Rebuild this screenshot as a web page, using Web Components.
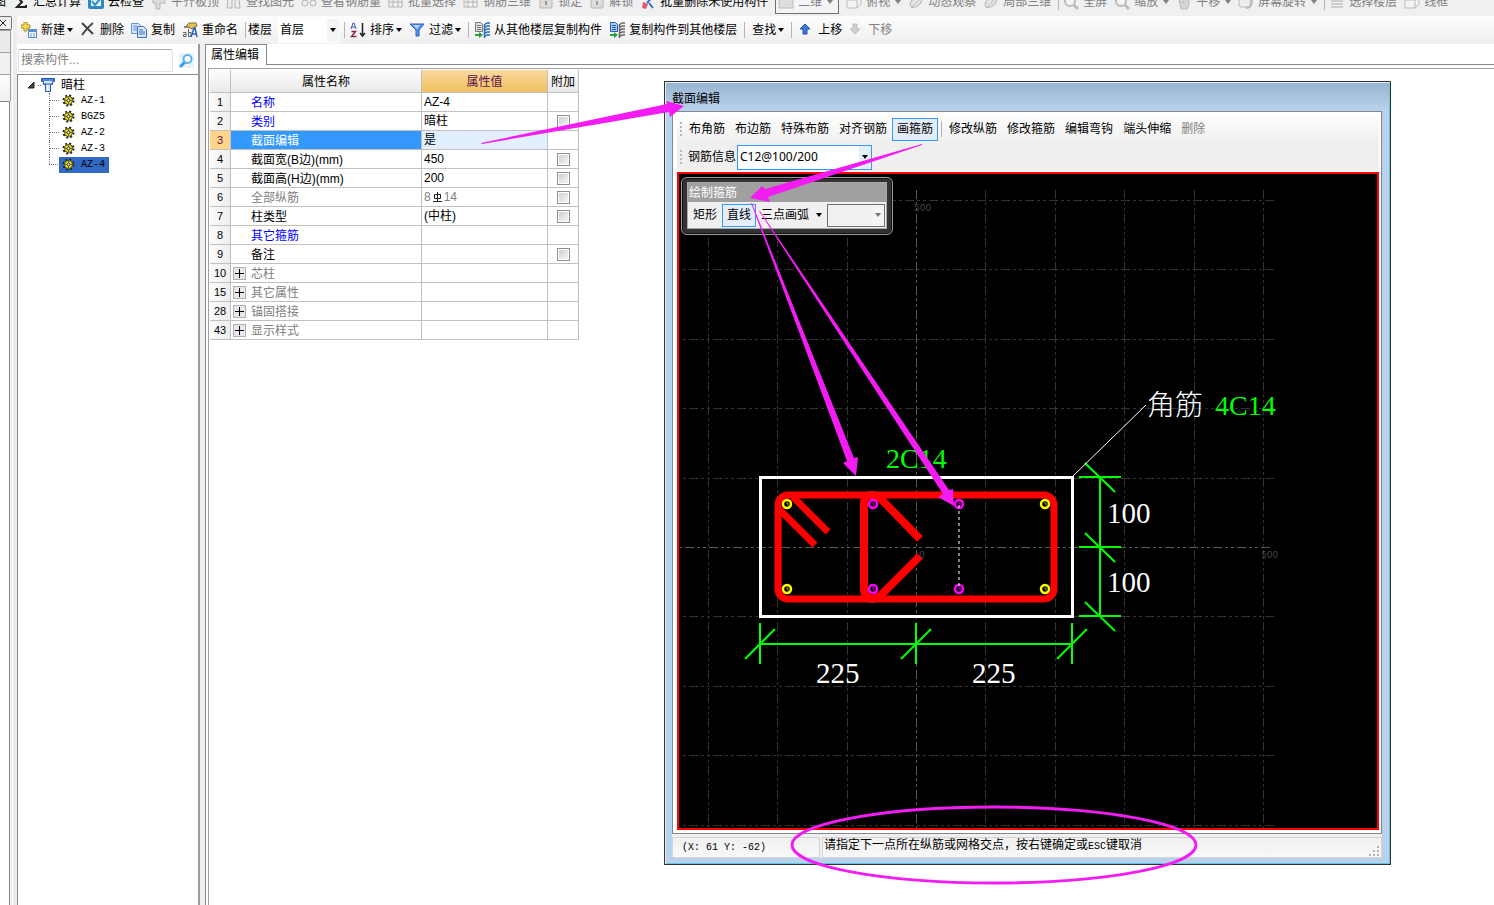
<!DOCTYPE html>
<html lang="zh-CN">
<head>
    <meta charset="UTF-8">
    <meta name="viewport" content="width=device-width, initial-scale=1.0">
    <title>属性编辑</title>
    <style>
        html, body {
            height: 100%;
        }
        body {
            margin: 0;
            overflow: hidden;
            background: #f0f0f0;
            color: #000;
            font: 12px/16px "Liberation Sans", "Noto Sans CJK SC", sans-serif;
        }
    </style>
</head>
<body>
    <main-window></main-window>

    <template id="tmpl-main">
        <style>
            :host {
                display: flex;
                flex-direction: column;
                height: 100vh;
            }
            .view-bar {
                --arrow-gap: 5px;
                --split-end: -3px;
                height: 16px;
                overflow: hidden;
                display: flex;
                align-items: flex-end;
                background: #f0f0f0;
            }
            .view-bar tool-bar {
                height: 29px;
            }
            .cut {
                margin-left: -6px;
            }
            .boxed {
                border: 1px solid #707070;
                height: 22px;
                display: flex;
                align-items: center;
                padding: 0 5px 0 2px;
                background: #f4f4f4;
            }
            .body {
                flex: 1;
                display: flex;
                min-height: 0;
            }
            .content {
                flex: 1;
                display: flex;
                flex-direction: column;
                min-width: 0;
            }
            .edit-bar {
                height: 28px;
                padding-left: 4px;
                background: linear-gradient(#fdfdfd, #efefef);
            }
            .floor {
                margin: 0 -3px;
            }
            .work {
                flex: 1;
                display: flex;
                min-height: 0;
            }
            component-tree {
                width: 183px;
                margin-right: 5px;
            }
            property-editor {
                flex: 1;
            }
            section-dialog {
                position: absolute;
                left: 664px;
                right: 103px;
                top: 81px;
                bottom: 40px;
            }
            note-layer {
                position: absolute;
                inset: 0;
            }
        </style>

        <div class="view-bar">
            <tool-bar>
                <span class="cut">图</span>
                <tool-button icon="sum">汇总计算</tool-button>
                <tool-button icon="cloud">云检查</tool-button>
                <tool-button icon="level" off>平齐板顶</tool-button>
                <tool-button icon="binocular" off>查找图元</tool-button>
                <tool-button icon="glasses" off>查看钢筋量</tool-button>
                <tool-button icon="grid" off>批量选择</tool-button>
                <tool-button icon="grid" off>钢筋三维</tool-button>
                <tool-button icon="lock" off>锁定</tool-button>
                <tool-button icon="lock" off>解锁</tool-button>
                <tool-button icon="brush">批量删除未使用构件</tool-button>
                <div class="boxed"><tool-button icon="plane" off arrow>二维</tool-button></div>
                <tool-button icon="cube" off arrow>俯视</tool-button>
                <tool-button icon="orbit" off>动态观察</tool-button>
                <tool-button icon="orbit" off>局部三维</tool-button>
                <tool-split></tool-split>
                <tool-button icon="zoom" off>全屏</tool-button>
                <tool-button icon="zoom" off arrow>缩放</tool-button>
                <tool-button icon="hand" off arrow>平移</tool-button>
                <tool-button icon="turn" off arrow>屏幕旋转</tool-button>
                <tool-split></tool-split>
                <tool-button icon="floors" off>选择楼层</tool-button>
                <tool-button icon="cube" off>线框</tool-button>
            </tool-bar>
        </div>

        <div class="body">
            <side-strip></side-strip>
            <div class="content">
                <tool-bar class="edit-bar">
                    <tool-button icon="new" arrow>新建</tool-button>
                    <tool-button icon="delete">删除</tool-button>
                    <tool-button icon="copy">复制</tool-button>
                    <tool-button icon="rename">重命名</tool-button>
                    <tool-split></tool-split>
                    <combo-box class="floor" label="楼层" value="首层" width="62" plain></combo-box>
                    <tool-split></tool-split>
                    <tool-button icon="sort" arrow>排序</tool-button>
                    <tool-button icon="filter" arrow>过滤</tool-button>
                    <tool-split></tool-split>
                    <tool-button icon="from">从其他楼层复制构件</tool-button>
                    <tool-button icon="to">复制构件到其他楼层</tool-button>
                    <tool-split class="wide"></tool-split>
                    <tool-button arrow>查找</tool-button>
                    <tool-split class="wide"></tool-split>
                    <tool-button icon="up">上移</tool-button>
                    <tool-button icon="down" off>下移</tool-button>
                </tool-bar>
                <div class="work">
                    <component-tree></component-tree>
                    <property-editor></property-editor>
                </div>
            </div>
        </div>
        <section-dialog></section-dialog>
        <note-layer></note-layer>
    </template>

    <template id="tmpl-bar">
        <style>
            :host {
                display: flex;
                align-items: center;
                gap: 7px;
                white-space: nowrap;
                box-sizing: border-box;
            }
        </style>
        <slot></slot>
    </template>

    <template id="tmpl-strip">
        <style>
            :host {
                width: 17px;
                flex: none;
                display: flex;
                flex-direction: column;
                background: linear-gradient(90deg, #f0f0f0 12px, #fafafa 12px, #fafafa 13px, #ececec 13px);
            }
            button {
                width: 12px;
                height: 14px;
                padding: 0;
                border: 1px solid #707070;
                border-left: 0;
                border-radius: 0 2px 2px 0;
                background: #f0f0f0;
                display: flex;
                align-items: center;
            }
            .row {
                width: 10px;
                height: 21px;
                border: 1px solid #a0a0a0;
                border-left: 0;
                border-bottom: 0;
                background: #ebebeb;
            }
            .row + .row {
                background: #f0f0f0;
            }
            .row.head {
                height: 26px;
                background: linear-gradient(#fdfdfd, #f0f0f0);
            }
            .page {
                flex: 1;
                width: 9px;
                border: 1px solid #828790;
                border-left: 0;
                border-bottom: 0;
                background: #fff;
            }
        </style>
        <button aria-label="关闭"><svg width="8" height="8" viewBox="0 0 8 8"><path d="M0 1l6 6M6 1l-6 6" stroke="#222" fill="none"/></svg></button>
        <div class="row"></div>
        <div class="row"></div>
        <div class="row head"></div>
        <div class="page"></div>
    </template>

    <template id="tmpl-tree">
        <style>
            :host {
                display: flex;
                flex-direction: column;
                box-sizing: border-box;
                border-right: 2px solid #9a9ca2;
                background: #fff;
            }
            .search {
                height: 30px;
                box-sizing: border-box;
                padding: 4px 4px 2px 1px;
                display: flex;
                align-items: center;
                gap: 6px;
            }
            input {
                flex: 1;
                min-width: 0;
                height: 23px;
                box-sizing: border-box;
                border: 1px solid #dbe2ee;
                border-top-color: #abadb3;
                border-radius: 2px;
                padding: 0 2px;
                font: inherit;
            }
            input::placeholder {
                color: #808080;
            }
            .find {
                border: 0;
                padding: 0;
                background: none;
                width: 15px;
                height: 15px;
            }
            .tree {
                flex: 1;
                border: 1px solid #828790;
                border-right: 0;
                border-bottom: 0;
                padding: 2px 0 0 8px;
            }
            .root {
                display: flex;
                align-items: center;
                height: 16px;
            }
            .root svg {
                flex: none;
            }
            ul {
                list-style: none;
                margin: 0 0 0 23px;
                padding: 0;
            }
            li {
                display: flex;
                height: 16px;
            }
            .branch {
                width: 9px;
                flex: none;
                border-left: 1px dotted #777;
                background: repeating-linear-gradient(90deg, #777 0 1px, transparent 1px 2px) 0 7px / 9px 1px no-repeat;
            }
            li:last-child .branch {
                width: 10px;
                border-left: 0;
                background: repeating-linear-gradient(90deg, #777 0 1px, transparent 1px 2px) 0 7px / 9px 1px no-repeat,
                    repeating-linear-gradient(#777 0 1px, transparent 1px 2px) 0 0 / 1px 8px no-repeat;
            }
            .item {
                display: flex;
                align-items: center;
                gap: 6px;
                padding: 0 4px 0 3px;
                font: 10px/16px "Liberation Mono", monospace;
            }
            .item svg {
                margin-bottom: 2px;
            }
            .item.on {
                background: #316ac5;
            }
        </style>
        <div class="search">
            <input type="text" placeholder="搜索构件..." aria-label="搜索构件">
            <button class="find" aria-label="搜索">
                <svg width="15" height="15" viewBox="0 0 15 15"><rect width="15" height="15" fill="#e6f3fc"/><path d="M2 13l4-4" stroke="#3f97dd" stroke-width="3" stroke-linecap="round"/><circle cx="8.500" cy="6" r="4" fill="#fff" stroke="#5cb0ee" stroke-width="2"/></svg>
            </button>
        </div>
        <div class="tree">
            <div class="root">
                <svg width="35" height="16" viewBox="0 0 35 16">
                    <path d="M8 5v6H2z" fill="#444" stroke="#222"/>
                    <path d="M12 8.500h3" stroke="#777" stroke-dasharray="1 1"/>
                    <path d="M15.500 1.500h13v3h-2v3h-2v7h-5v-7h-2v-3h-2z" fill="#d8e8fb" stroke="#2a52b8"/>
                    <path d="M16 2h12v2H16z" fill="#4e86dc"/><path d="M21 8h1v6h-1z" fill="#fff"/><path d="M18 7h8" stroke="#2a52b8"/>
                </svg>
                <span>暗柱</span>
            </div>
            <ul></ul>
        </div>
    </template>

    <template id="tmpl-props">
        <style>
            :host {
                display: flex;
                flex-direction: column;
                background: #fff;
                border-left: 1px solid #828790;
                min-width: 0;
            }
            .tabs {
                display: flex;
                height: 21px;
            }
            .tab {
                border: 1px solid #828790;
                border-left: 0;
                border-bottom: 0;
                padding: 0 7px 1px 5px;
                font: inherit;
                background: #fff;
            }
            .rest {
                flex: 1;
                border-bottom: 1px solid #828790;
            }
            .pane {
                flex: 1;
                margin: 3px 0 0 2px;
                border-top: 1px solid #a0a0a0;
                border-left: 1px solid #a0a0a0;
                padding: 1px;
            }
            table {
                border-spacing: 0;
                table-layout: fixed;
                width: 369px;
            }
            th, td {
                box-sizing: border-box;
                height: 19px;
                padding: 0;
                border-right: 1px solid #c0c0c0;
                border-bottom: 1px solid #c0c0c0;
                font-weight: normal;
                text-align: left;
                white-space: nowrap;
                line-height: 16px;
            }
            thead th {
                height: 23px;
                padding-top: 2px;
                text-align: center;
                background: linear-gradient(#fdfdfd, #e9e9e9);
            }
            thead th.hot {
                background: linear-gradient(#f9d99f, #f1c15f);
                color: #5b0f4c;
            }
            tbody th {
                text-align: center;
                font-size: 11px;
                background: linear-gradient(90deg, #fbfbfb, #eeeeee);
            }
            .name {
                padding-top: 2px;
            }
            .name > div {
                display: flex;
                align-items: center;
                padding-left: 20px;
            }
            .name > .group {
                padding-left: 2px;
                gap: 5px;
            }
            .group button {
                width: 13px;
                height: 13px;
                margin-bottom: 2px;
                padding: 0;
                border: 1px solid #b0b0b0;
                background: #e8e8ea;
                display: flex;
                align-items: center;
                justify-content: center;
            }
            .value {
                padding-left: 2px;
            }
            .blue {
                color: #0000ff;
            }
            .gray {
                color: #808080;
            }
            tr.on th {
                background: #ffd58c;
                color: #5b0f4c;
            }
            tr.on .name {
                background: #3399ff;
                color: #fff;
            }
            tr.on .value {
                background: #e1efff;
            }
            .tick {
                text-align: center;
            }
            input {
                appearance: none;
                display: block;
                width: 13px;
                height: 13px;
                margin: 0 auto;
                border: 1px solid #8e8f8f;
                background: linear-gradient(135deg, #cbcfd5, #f6f6f6) content-box #f4f4f4;
                padding: 1px;
                box-sizing: border-box;
            }
            .bar-sign {
                vertical-align: -1px;
                margin: 0 2px;
            }
        </style>
        <div class="tabs"><button class="tab">属性编辑</button><div class="rest"></div></div>
        <div class="pane">
            <table>
                <colgroup><col style="width: 21px"><col style="width: 191px"><col style="width: 126px"><col style="width: 31px"></colgroup>
                <thead><tr><th></th><th>属性名称</th><th class="hot">属性值</th><th>附加</th></tr></thead>
                <tbody></tbody>
            </table>
        </div>
    </template>

    <template id="tmpl-dialog">
        <style>
            :host {
                display: flex;
                flex-direction: column;
                box-sizing: border-box;
                border: 1px solid #333;
                box-shadow: inset 1px 1px 0 0 #e4eefa, inset -1px -1px 0 0 #5cc8e8;
                padding: 1px 8px 6px 7px;
                background: linear-gradient(#99b4d1, #b9d1ea 28px) padding-box;
            }
            h2 {
                margin: 0;
                height: 28px;
                font: inherit;
                line-height: 32px;
            }
            .frame {
                flex: 1;
                min-height: 0;
                display: flex;
                flex-direction: column;
                border: 1px solid #828790;
                background: #fff;
                padding: 3px 2px 3px 4px;
            }
            .bars {
                background: linear-gradient(#fdfdfd, #efefef 28px);
                padding-left: 3px;
            }
            .bar {
                display: flex;
                align-items: center;
                height: 28px;
            }
            .grip {
                width: 2px;
                height: 14px;
                margin-right: 2px;
                background: repeating-linear-gradient(#b8b8b8 0 2px, transparent 2px 4px);
            }
            .bar combo-box {
                margin-left: 4px;
            }
            .canvas {
                flex: 1;
                min-height: 0;
                margin-top: 1px;
                border: 2px solid #f00;
                background: #000;
                position: relative;
            }
            section-drawing {
                position: absolute;
                inset: 0;
            }
            stirrup-palette {
                position: absolute;
                left: 2px;
                top: 3px;
            }
            .status {
                display: flex;
                gap: 2px;
                height: 21px;
                padding-top: 3px;
                background: #f0f0f0;
            }
            .status > div {
                box-sizing: border-box;
                border: 1px solid #d4d4d4;
                background: linear-gradient(#f0f0f0, #f8f8f8);
                line-height: 20px;
            }
            .pos {
                width: 148px;
                padding-left: 9px;
            }
            .pos, .key {
                font-family: "Liberation Mono", monospace;
                font-size: 10px;
            }
            .tip {
                flex: 1;
                display: flex;
                justify-content: space-between;
                align-items: flex-end;
                padding-left: 1px;
            }
        </style>
        <h2>截面编辑</h2>
        <div class="frame">
            <div class="bars">
                <div class="bar">
                    <span class="grip"></span>
                    <text-button>布角筋</text-button><text-button>布边筋</text-button><text-button>特殊布筋</text-button><text-button>对齐钢筋</text-button><text-button on>画箍筋</text-button>
                    <tool-split class="tight"></tool-split>
                    <text-button>修改纵筋</text-button><text-button>修改箍筋</text-button><text-button>编辑弯钩</text-button><text-button>端头伸缩</text-button><text-button off>删除</text-button>
                </div>
                <div class="bar">
                    <span class="grip"></span>
                    <combo-box label="钢筋信息" value="C12@100/200" width="135" hot></combo-box>
                </div>
            </div>
            <div class="canvas">
                <section-drawing></section-drawing>
                <stirrup-palette></stirrup-palette>
            </div>
        </div>
        <div class="status">
            <div class="pos">(X: 61 Y: -62)</div>
            <div class="tip">
                <span>请指定下一点所在纵筋或网格交点，按右键确定或<span class="key">ESC</span>键取消</span>
                <svg width="12" height="12" viewBox="0 0 12 12"><path d="M8 1h2v2H8zM8 5h2v2H8zM4 5h2v2H4zM8 9h2v2H8zM4 9h2v2H4zM0 9h2v2H0z" fill="#b4b4b4"/></svg>
            </div>
        </div>
    </template>

    <template id="tmpl-palette">
        <style>
            :host {
                display: block;
                width: 212px;
                box-sizing: border-box;
                padding: 4px 5px 5px;
                border: 1px solid #9a9a9a;
                border-radius: 6px;
                background: #333;
                box-shadow: inset 0 0 0 1px #111;
            }
            .in {
                border: 1px solid #aaa;
                background: #f0f0f0;
            }
            .title {
                height: 19px;
                line-height: 20px;
                padding-left: 1px;
                background: #a0a0a0;
                color: #fff;
            }
            .row {
                display: flex;
                align-items: center;
                height: 26px;
            }
            .arrow {
                margin: 0 5px 0 2px;
            }
        </style>
        <div class="in">
            <div class="title">绘制箍筋</div>
            <div class="row">
                <text-button>矩形</text-button><text-button on>直线</text-button><text-button>三点画弧</text-button>
                <svg class="arrow" width="6" height="4" viewBox="0 0 6 4"><path d="M0 0h6L3 4z"/></svg>
                <combo-box width="58" dim></combo-box>
            </div>
        </div>
    </template>

    <script>
        const ICONS = {
            sum: '<path d="M12 3H4l5 5-5 5h9v-2" fill="none" stroke="#222" stroke-width="2"/>',
            cloud: '<rect x="0" y="1" width="16" height="14" rx="2" fill="#2a8ac8"/><path d="M3 5h10v7H3z" fill="#e8f4fc"/><path d="M4 7l3 4 5-6" stroke="#2a8ac8" stroke-width="2" fill="none"/>',
            level: '<path d="M2 4h12v5H9v6H5V9H2z" fill="#ddd" stroke="#b4b4b4"/>',
            binocular: '<path d="M2 5h4v9H1zM9 5h4l1 9H9z" fill="#eee" stroke="#b4b4b4"/>',
            glasses: '<circle cx="4" cy="9" r="3" fill="#eee" stroke="#b4b4b4"/><circle cx="12" cy="9" r="3" fill="#eee" stroke="#b4b4b4"/>',
            grid: '<path d="M1 3h13v10H1zM1 8h13M5 3v10M10 3v10" fill="none" stroke="#b4b4b4"/>',
            lock: '<rect x="2" y="5" width="12" height="9" rx="1" fill="#ddd" stroke="#b4b4b4"/><path d="M8 7v4" stroke="#999" stroke-width="2"/>',
            brush: '<path d="M13 2L7 9" stroke="#2a70c8" stroke-width="2"/><path d="M3 8l5 2-2 5-4-1z" fill="#e05a6a"/><path d="M9 9l4 5" stroke="#2a70c8" stroke-width="2"/>',
            plane: '<rect x="1" y="3" width="14" height="11" fill="#ddd" stroke="#bbb"/>',
            cube: '<path d="M1 6l4-4h10v8l-4 4H1zM1 6h10v8M11 6l4-4" fill="#f4f4f4" stroke="#bbb"/>',
            orbit: '<ellipse cx="8" cy="8" rx="7" ry="4" transform="rotate(-40 8 8)" fill="#e4e4e4" stroke="#b4b4b4"/><path d="M3 14l9-9" stroke="#bbb"/>',
            zoom: '<circle cx="7" cy="7" r="5" fill="#f4f4f4" stroke="#bbb" stroke-width="2"/><path d="M11 11l4 4" stroke="#bbb" stroke-width="3"/>',
            hand: '<path d="M3 6l4 3V3h6v8l-2 4H5z" fill="#d4d4d4" stroke="#bbb"/>',
            turn: '<rect x="1" y="4" width="11" height="9" rx="2" fill="#eee" stroke="#bbb"/><path d="M8 14c5 0 6-4 6-8" fill="none" stroke="#bbb" stroke-width="2"/>',
            floors: '<path d="M2 4h12M2 7h12M2 10h12M2 13h12" stroke="#aaa"/>',
            new: '<path d="M3 0h3v3h3v3H6v3H3V6H0V3h3z" fill="#f6e24a" stroke="#a8902a"/><rect x="7.500" y="7.500" width="8" height="8" fill="#eaf3ff" stroke="#5f8fd0"/><path d="M7 8h9v2H7z" fill="#5f8fd0"/><path d="M9 12h2M12 12h2M9 14h2M12 14h2" stroke="#7aa0d8"/>',
            delete: '<path d="M2 1c3 3 8 8 11 11M13 1C9 4 5 9 2 13" stroke="#444" stroke-width="2" fill="none"/>',
            copy: '<path d="M.5 1.500h7l2 2v8h-9z" fill="#d8e8fb" stroke="#6a94d4"/><path d="M2 4h4M2 6h5M2 8h5" stroke="#6a94d4"/><path d="M6.500 4.500h6l3 3v8h-9z" fill="#d8e8fb" stroke="#3a6cc0"/><path d="M8 8h4M8 10h6M8 12h6" stroke="#3a6cc0"/>',
            rename: '<path d="M4 4l3-3h7l1 3-5 3z" fill="#e0c050" stroke="#8a7430"/><path d="M2 5h5" stroke="#888" stroke-width="2"/><path d="M1 10.500h3v4H1.500v-2H4M6.500 7v7.500H9v-4H6.500" fill="none" stroke="#666"/><path d="M9 15l3-9h1l2 9M10 12h5" fill="none" stroke="#2a60c8" stroke-width="1.500"/>',
            sort: '<path d="M1 7l2-6h1l2 6M2 5h3" fill="none" stroke="#2a60b8"/><path d="M1.500 9.500h4l-4 5h5" fill="none" stroke="#8a2a3a" stroke-width="1.500"/><path d="M12.500 1v12M10 11l2.500 3 2.500-3" fill="none" stroke="#222" stroke-width="1.500"/>',
            filter: '<path d="M1 2h14L10 8v6H7V8z" fill="#5a94ea" stroke="#2a5cc0"/><path d="M4 3h7L8 7z" fill="#b4d4fb"/>',
            from: '<path d="M1.500.5h5l2 2v7h-7z" fill="#ddd" stroke="#777"/><path d="M3 3.500h4M3 5.500h4M3 7.500h4" stroke="#777"/><path d="M1 12h4v-2l4 3-4 3v-2H1z" fill="#28a038"/><path d="M10 3l3-2h3M10 6l3-2h3M10 9l3-2h3M10 12l3-2h3M10 15l3-2h3M10.500 3v13" stroke="#2a6cc0" fill="none" stroke-width="1.500"/>',
            to: '<path d="M1.500.5h5l2 2v7h-7z" fill="#a8ccf8" stroke="#2a5cc0"/><path d="M3 3.500h4M3 5.500h4M3 7.500h4" stroke="#2a5cc0"/><path d="M1 12h4v-2l4 3-4 3v-2H1z" fill="#28a038"/><path d="M10 3l3-2h3M10 6l3-2h3M10 9l3-2h3M10 12l3-2h3M10 15l3-2h3M10.500 3v13" stroke="#666" fill="none" stroke-width="1.500"/>',
            up: '<path d="M6 2l5 5H8v5H4V7H1z" fill="#3f78dc" stroke="#2450a8"/>',
            down: '<path d="M6 12L1 7h3V2h4v5h3z" fill="#cfcfcf" stroke="#bdbdbd"/>'
        }

        const GEAR = '<svg width="13" height="13" viewBox="0 0 13 13"><circle cx="6.500" cy="6.500" r="5" fill="none" stroke="#222" stroke-width="2" stroke-dasharray="2 1.930"/><circle cx="6.500" cy="6.500" r="4" fill="#f8f040" stroke="#4a4600"/><path d="M6.500 3v7M3 6.500h7" stroke="#77701c"/><circle cx="6.500" cy="6.500" r="1.500" fill="#fff" stroke="#222"/></svg>'
        const ARROW = '<path d="M0 0h6L3 4z" fill="currentColor"/>'

        // Attaches an open shadow root filled from a template
        function mount (host, id) {
            const shadow = host.attachShadow({mode: 'open'})
            shadow.append(document.getElementById(id).content.cloneNode(true))
            return shadow
        }

        customElements.define('tool-bar', class extends HTMLElement {
            connectedCallback() {
                mount(this, 'tmpl-bar')
            }
        })

        customElements.define('tool-split', class extends HTMLElement {
            connectedCallback() {
                this.attachShadow({mode: 'open'}).innerHTML = `
                    <style>
                        :host { flex: none; width: 1px; height: 16px; margin-right: var(--split-end, -2px); background: #b4b4b4; }
                        :host(.wide) { margin-right: 0; }
                        :host(.tight) { margin: 0 2px 0 3px; }
                    </style>`
            }
        })

        customElements.define('tool-button', class extends HTMLElement {
            connectedCallback() {
                const name = this.getAttribute('icon')
                const small = name === 'up' || name === 'down'
                const width = small ? 12 : 16
                const icon = name ? `<svg width="${width}" height="16" viewBox="0 0 ${width} 16">${ICONS[name]}</svg>` : ''
                const arrow = this.hasAttribute('arrow') ? `<svg class="arrow" width="6" height="4" viewBox="0 0 6 4">${ARROW}</svg>` : ''

                this.attachShadow({mode: 'open'}).innerHTML = `
                    <style>
                        :host { display: block; flex: none; }
                        button { display: flex; align-items: center; gap: ${small ? 7 : 4}px; border: 0; padding: 0; background: none; color: #000; font: inherit; }
                        :host([off]) button { color: #808080; }
                        .arrow { margin-left: calc(var(--arrow-gap, 2px) - 4px); }
                    </style>
                    <button>${icon}<span><slot></slot></span>${arrow}</button>`
            }
        })

        customElements.define('text-button', class extends HTMLElement {
            connectedCallback() {
                this.attachShadow({mode: 'open'}).innerHTML = `
                    <style>
                        :host { display: block; flex: none; }
                        button { height: 23px; padding: 0 4px; border: 1px solid transparent; background: none; color: #000; font: inherit; white-space: nowrap; display: block; }
                        :host([on]) button { border-color: #3399ff; background: #e4eefa; }
                        :host([off]) button { color: #808080; }
                    </style>
                    <button><slot></slot></button>`
            }
        })

        customElements.define('combo-box', class extends HTMLElement {
            connectedCallback() {
                const label = this.getAttribute('label')
                const value = this.getAttribute('value') || ''
                const hot = this.hasAttribute('hot')

                this.attachShadow({mode: 'open'}).innerHTML = `
                    <style>
                        :host { display: flex; align-items: center; flex: none; }
                        label { margin-right: ${hot ? 1 : 6}px; white-space: nowrap; }
                        .box { display: grid; align-items: center; width: ${this.getAttribute('width')}px; box-sizing: border-box; height: 25px; background: #fff; border: 1px solid #3399ff; }
                        :host([plain]) .box { border-color: #fff; }
                        :host([dim]) .box { border-color: #707070; background: #f0f0f0; height: 23px; }
                        select, .drop { grid-area: 1 / 1; }
                        select { appearance: none; border: 0; background: none; width: 100%; height: 100%; padding: 0 2px; color: #000; font: inherit; }
                        :host([plain]) select { padding: 0 1px; }
                        :host([hot]) select { font-family: "Noto Sans", sans-serif; }
                        .drop { justify-self: end; align-self: stretch; width: 12px; display: flex; align-items: center; justify-content: center; background: ${hot ? '#e4eefa' : '#f4f4f4'}; pointer-events: none; }
                        :host([dim]) .drop { color: #777; }
                    </style>
                    ${label ? `<label for="list">${label}</label>` : ''}
                    <div class="box">
                        <select id="list" aria-label="${label || '弧'}"><option>${value}</option></select>
                        <span class="drop"><svg width="6" height="4" viewBox="0 0 6 4">${ARROW}</svg></span>
                    </div>`
            }
        })

        customElements.define('side-strip', class extends HTMLElement {
            connectedCallback() {
                mount(this, 'tmpl-strip')
            }
        })

        customElements.define('component-tree', class extends HTMLElement {
            connectedCallback() {
                const shadow = mount(this, 'tmpl-tree')
                const names = ['AZ-1', 'BGZ5', 'AZ-2', 'AZ-3', 'AZ-4']

                shadow.querySelector('ul').innerHTML = names.map(function (name) {
                    return `<li><span class="branch"></span><span class="item ${name === 'AZ-4' ? 'on' : ''}">${GEAR}${name}</span></li>`
                }).join('')
            }
        })

        customElements.define('property-editor', class extends HTMLElement {
            connectedCallback() {
                const shadow = mount(this, 'tmpl-props')
                const sign = '<svg class="bar-sign" width="9" height="10" viewBox="0 0 9 10"><path d="M4.500 0v10M0 9.500h9M1.500 2.500h6v4h-6z" fill="none" stroke="#222"/></svg>'

                // number, name, value, name colour, has a tick box
                const rows = [
                    [1, '名称', 'AZ-4', 'blue', false],
                    [2, '类别', '暗柱', 'blue', true],
                    [3, '截面编辑', '是', '', false],
                    [4, '截面宽(B边)(mm)', '450', '', true],
                    [5, '截面高(H边)(mm)', '200', '', true],
                    [6, '全部纵筋', `<span class="gray">8${sign}14</span>`, 'gray', true],
                    [7, '柱类型', '(中柱)', '', true],
                    [8, '其它箍筋', '', 'blue', false],
                    [9, '备注', '', '', true],
                    [10, '芯柱', '', 'gray', false],
                    [15, '其它属性', '', 'gray', false],
                    [28, '锚固搭接', '', 'gray', false],
                    [43, '显示样式', '', 'gray', false]
                ]

                shadow.querySelector('tbody').innerHTML = rows.map(function ([no, name, value, color, tick]) {
                    const group = no >= 10
                    const plus = '<button aria-label="展开"><svg width="9" height="9" viewBox="0 0 9 9"><path d="M0 4.500h9M4.500 0v9" stroke="#000"/></svg></button>'

                    return `<tr class="${no === 3 ? 'on' : ''}">
                        <th>${no}</th>
                        <td class="name ${color}"><div class="${group ? 'group' : ''}">${group ? plus : ''}<span>${name}</span></div></td>
                        <td class="value">${value}</td>
                        <td class="tick">${tick ? `<input type="checkbox" aria-label="附加 ${name}">` : ''}</td>
                    </tr>`
                }).join('')
            }
        })

        customElements.define('section-drawing', class extends HTMLElement {
            connectedCallback() {
                const dash = 'stroke-dasharray="9 3 3 3 3 3"'
                const step = 69.4
                let grid = ''
                let dims = ''
                let bars = ''

                for (let i = -3; i <= 5; i++) {
                    const x = Math.round(i * step) + 0.5
                    grid += `<path d="M${x} -357V282" stroke="${i === 0 ? '#5a5a5a' : '#323232'}" ${dash}/>`
                }
                for (let i = -5; i <= 4; i++) {
                    const y = Math.round(i * step) + 0.5
                    grid += `<path d="M${i === 0 ? 354 : 358} ${y}H-236" stroke="${i === 0 ? '#5a5a5a' : '#323232'}" ${dash}/>`
                }

                for (const x of [-156, 0, 156]) {
                    dims += `M${x} 76V117M${x - 15} 112l30 -30`
                }
                for (const y of [-70, 0, 69]) {
                    dims += `M163 ${y}h42M169 ${y - 14}l30 29`
                }

                for (const x of [-129, -43, 43, 129]) {
                    for (const y of [-43, 42]) {
                        const color = Math.abs(x) === 129 ? '#ff0' : '#f0f'
                        bars += `<circle cx="${x}" cy="${y}" r="4" fill="#000" stroke="${color}" stroke-width="2.500"/><path d="M${x - 1} ${y - 1}h2v3" stroke="${color}" opacity=".6"/>`
                    }
                }

                this.attachShadow({mode: 'open'}).innerHTML = `
                    <style>
                        :host { display: block; }
                        svg { display: block; width: 100%; height: 100%; }
                        .big { font: 29px "Liberation Serif", "Noto Sans CJK SC", serif; fill: #fff; }
                        .cjk { font: 28px "Noto Sans CJK SC", sans-serif; font-weight: 300; }
                        .green { fill: #0f0; font-size: 28px; }
                        .axis { font: 9px "DejaVu Sans", sans-serif; fill: #444; }
                    </style>
                    <svg>
                        <g transform="translate(237 373)" fill="none">
                            ${grid}
                            <text class="axis" x="-2" y="-336">500</text>
                            <text class="axis" x="345" y="11">500</text>
                            <text class="big green" x="-30" y="-79">2C14</text>
                            <rect x="-156" y="-70" width="312" height="139" stroke="#fff" stroke-width="3" shape-rendering="crispEdges"/>
                            <g stroke="#f00" stroke-width="7">
                                <rect x="-138" y="-52" width="276" height="104" rx="10"/>
                                <path d="M-123 -50l35 35M-136 -37l35 35"/>
                                <path d="M-52 44V-44Q-52 -52 -43 -52L-36 -49L4 -8M-52 40Q-52 52 -43 52L-36 49L4 9" stroke-width="8"/>
                            </g>
                            <text class="axis" x="3" y="11">0</text>
                            <path d="M-156 97H156M184 -70V69${dims}" stroke="#0f0" stroke-width="2"/>
                            ${bars}
                            <path d="M43 -42V42" stroke="#fff" stroke-dasharray="3 3"/>
                            <path d="M157 -71L230 -142" stroke="#fff"/>
                            <text class="big" x="-100" y="136">225</text>
                            <text class="big" x="56" y="136">225</text>
                            <text class="big" x="191" y="-24">100</text>
                            <text class="big" x="191" y="45">100</text>
                            <text class="big cjk" x="231" y="-132">角筋</text>
                            <text class="big green" x="299" y="-132">4C14</text>
                        </g>
                    </svg>`
            }
        })

        customElements.define('stirrup-palette', class extends HTMLElement {
            connectedCallback() {
                mount(this, 'tmpl-palette')
            }
        })

        customElements.define('section-dialog', class extends HTMLElement {
            connectedCallback() {
                mount(this, 'tmpl-dialog')
            }
        })

        // Magenta arrows and the ring drawn over the windows
        customElements.define('note-layer', class extends HTMLElement {
            connectedCallback() {
                this.attachShadow({mode: 'open'}).innerHTML = `
                    <style>
                        :host { display: block; pointer-events: none; }
                        svg { display: block; width: 100%; height: 100%; }
                    </style>
                    <svg fill="#f31cf3">
                        <path d="M481 143L667 104L666 101L684 106L670 117L669 112L482 144z"/>
                        <path d="M922 144L765 189L762 186L750 198L770 202L768 197L922 145z"/>
                        <path d="M751 203L847 461L843 463L856 476L858 457L854 458L752 203z"/>
                        <path d="M759 211L943 494L938 497L954 506L953 489L949 490L760 211z"/>
                        <ellipse cx="994" cy="845" rx="202" ry="38" fill="none" stroke="#f31cf3" stroke-width="3"/>
                    </svg>`
            }
        })

        customElements.define('main-window', class extends HTMLElement {
            connectedCallback() {
                mount(this, 'tmpl-main')
            }
        })
    </script>
</body>
</html>
